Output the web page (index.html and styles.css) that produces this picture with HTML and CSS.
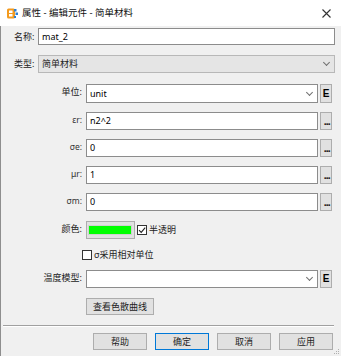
FILE: index.html
```html
<!DOCTYPE html>
<html lang="zh-CN">
<head>
<meta charset="utf-8">
<title>属性 - 编辑元件 - 简单材料</title>
<link rel="stylesheet" href="styles.css">
</head>
<body>
<div class="window">
  <div class="titlebar">
    <svg class="app-icon" viewBox="0 0 11 11" width="11" height="11">
      <rect x="0" y="0.5" width="8" height="10" rx="1.5" fill="#f39a1e"/>
      <rect x="2" y="2.5" width="3.5" height="2.5" fill="#fff"/>
      <rect x="2" y="6" width="3.5" height="2.5" fill="#fff"/>
      <rect x="7" y="1" width="2.5" height="2.5" fill="#2d7fd3"/>
      <rect x="8.5" y="4.5" width="2.5" height="2.5" fill="#2d7fd3"/>
      <rect x="7" y="8" width="2" height="2" fill="#2d7fd3"/>
    </svg>
    <span class="title">属性 - 编辑元件 - 简单材料</span>
    <svg class="close" viewBox="0 0 9 9" width="9" height="9">
      <path d="M0.5 0.5 L8.5 8.5 M8.5 0.5 L0.5 8.5" stroke="#333" stroke-width="1.1" fill="none"/>
    </svg>
  </div>
  <div class="main">
    <div class="toprow row-name">
      <span class="toplbl">名称:</span>
      <div class="field textbox">mat_2</div>
    </div>
    <div class="toprow row-type">
      <span class="toplbl">类型:</span>
      <div class="field combo disabled"><span>简单材料</span><span class="chev"></span></div>
    </div>

    <div class="frow first">
      <span class="flbl">单位:</span>
      <div class="field combo"><span>unit</span><span class="chev"></span></div>
      <div class="side e">E</div>
    </div>
    <div class="frow">
      <span class="flbl greek">εr:</span>
      <div class="field textbox">n2^2</div>
      <div class="side dots">...</div>
    </div>
    <div class="frow">
      <span class="flbl greek">σe:</span>
      <div class="field textbox">0</div>
      <div class="side dots">...</div>
    </div>
    <div class="frow">
      <span class="flbl greek">μr:</span>
      <div class="field textbox">1</div>
      <div class="side dots">...</div>
    </div>
    <div class="frow">
      <span class="flbl greek">σm:</span>
      <div class="field textbox">0</div>
      <div class="side dots">...</div>
    </div>
    <div class="frow color-row">
      <span class="flbl">颜色:</span>
      <div class="swatch"><span class="green"></span></div>
      <span class="check checked">
        <svg viewBox="0 0 10 10" width="10" height="10"><path d="M2 5.2 L4.2 7.4 L8.2 2.6" stroke="#222" stroke-width="1.1" fill="none"/></svg>
      </span>
      <span class="cklbl">半透明</span>
    </div>
    <div class="ckrow">
      <span class="check"></span>
      <span class="cklbl">σ采用相对单位</span>
    </div>
    <div class="frow temp-row">
      <span class="flbl">温度模型:</span>
      <div class="field combo"><span></span><span class="chev"></span></div>
      <div class="side e">E</div>
    </div>
    <div class="btnrow">
      <div class="btn curve">查看色散曲线</div>
    </div>
    <div class="sep"></div>
    <div class="footer">
      <div class="btn fbtn">帮助</div>
      <div class="btn fbtn default">确定</div>
      <div class="btn fbtn">取消</div>
      <div class="btn fbtn">应用</div>
    </div>
    <svg class="grip" viewBox="0 0 6 6" width="6" height="6">
      <rect x="4" y="0" width="1" height="1" fill="#b0b0b0"/>
      <rect x="2" y="2" width="1" height="1" fill="#b0b0b0"/>
      <rect x="4" y="2" width="1" height="1" fill="#b0b0b0"/>
      <rect x="0" y="4" width="1" height="1" fill="#b0b0b0"/>
      <rect x="2" y="4" width="1" height="1" fill="#b0b0b0"/>
      <rect x="4" y="4" width="1" height="1" fill="#b0b0b0"/>
    </svg>
  </div>
</div>
</body>
</html>
```

FILE: styles.css
```css
* { box-sizing: border-box; }
html, body { margin: 0; padding: 0; }
body {
  width: 341px;
  height: 356px;
  overflow: hidden;
  background: #f0f0f0;
  color: #000;
  font-family: "Noto Sans", "Noto Sans CJK SC", sans-serif;
  font-size: 9px;
  line-height: 12px;
}
.window {
  height: 356px;
  display: flex;
  flex-direction: column;
}
.titlebar {
  flex: none;
  height: 26px;
  background: #fff;
  display: flex;
  align-items: center;
  padding-left: 7px;
}
.app-icon { flex: none; }
.title { margin-left: 4px; font-size: 9.5px; color: #111; }
.close { margin-left: auto; margin-right: 10px; }

.main {
  flex: 1;
  position: relative;
  border-left: 1px solid #8e8e8e;
  display: flex;
  flex-direction: column;
}

.toprow {
  display: flex;
  align-items: center;
  padding-left: 13px;
  padding-right: 6px;
}
.row-name { margin-top: 2px; height: 17px; }
.row-type { margin-top: 10px; height: 18px; }
.toplbl { width: 24px; flex: none; color: #222; }

.field {
  height: 100%;
  border: 1px solid #8c8c8c;
  background: #fff;
  display: flex;
  align-items: center;
  padding-left: 3px;
  padding-right: 4px;
}
.toprow .field { flex: 1; }
.combo { justify-content: space-between; }
.combo.disabled {
  background: #e5e5e5;
  border-color: #b8b8b8;
  color: #222;
}
.chev {
  width: 5px;
  height: 5px;
  border-right: 1px solid #707070;
  border-bottom: 1px solid #707070;
  transform: rotate(45deg);
  margin-top: -3px;
  margin-right: 1px;
}

.frow {
  display: flex;
  align-items: flex-start;
  height: 18px;
  margin-top: 9px;
}
.frow.first { margin-top: 11px; height: 19px; }
.flbl {
  flex: none;
  width: 85px;
  padding-right: 4px;
  text-align: right;
  line-height: 15px;
  color: #222;
}
.greek { font-size: 8.5px; color: #333; }
.frow .field { width: 232px; flex: none; }
.side {
  flex: none;
  width: 12px;
  height: 100%;
  margin-left: 2px;
  background: #e1e1e1;
  border: 1px solid #adadad;
  display: flex;
  justify-content: center;
}
.side.e {
  align-items: center;
  font-weight: bold;
  font-size: 10px;
  font-family: "Liberation Sans", Arial, sans-serif;
}
.side.dots {
  align-items: center;
  font-family: "DejaVu Sans", sans-serif;
  font-size: 9px;
  line-height: 9px;
  letter-spacing: -1.5px;
  font-weight: bold;
  padding-top: 2px;
  padding-left: 1px;
  color: #222;
}

.color-row { margin-top: 10px; align-items: center; }
.color-row .flbl { align-self: flex-start; }
.swatch {
  flex: none;
  width: 49px;
  height: 18px;
  background: #e1e1e1;
  border: 1px solid #adadad;
  padding: 3px 2px 3px 1px;
  display: flex;
}
.green { flex: 1; background: #00ff00; border: 1px solid #d0d0d0; }
.check {
  flex: none;
  width: 10px;
  height: 10px;
  border: 1px solid #333;
  background: #fff;
  margin-left: 2px;
  display: flex;
  position: relative;
}
.check svg { position: absolute; left: -1px; top: -1px; }
.cklbl { margin-left: 2px; color: #222; }

.ckrow {
  display: flex;
  align-items: center;
  height: 12px;
  margin-top: 10px;
  padding-left: 79px;
}

.temp-row { margin-top: 9px; }

.btn {
  background: #e1e1e1;
  border: 1px solid #adadad;
  display: flex;
  align-items: center;
  justify-content: center;
  color: #222;
}
.btnrow { margin-top: 10px; padding-left: 85px; display: flex; }
.curve { width: 68px; height: 17px; }

.sep {
  margin: 10px 7px 0 2px;
  border-top: 1px solid #a0a0a0;
  border-bottom: 1px solid #fff;
}
.footer {
  margin-top: 6px;
  display: flex;
  justify-content: flex-end;
  gap: 8px;
  padding-right: 8px;
}
.fbtn { width: 54px; height: 17px; }
.fbtn.default { border-color: #0078d7; }

.grip { position: absolute; right: 1px; bottom: 1px; }
```
